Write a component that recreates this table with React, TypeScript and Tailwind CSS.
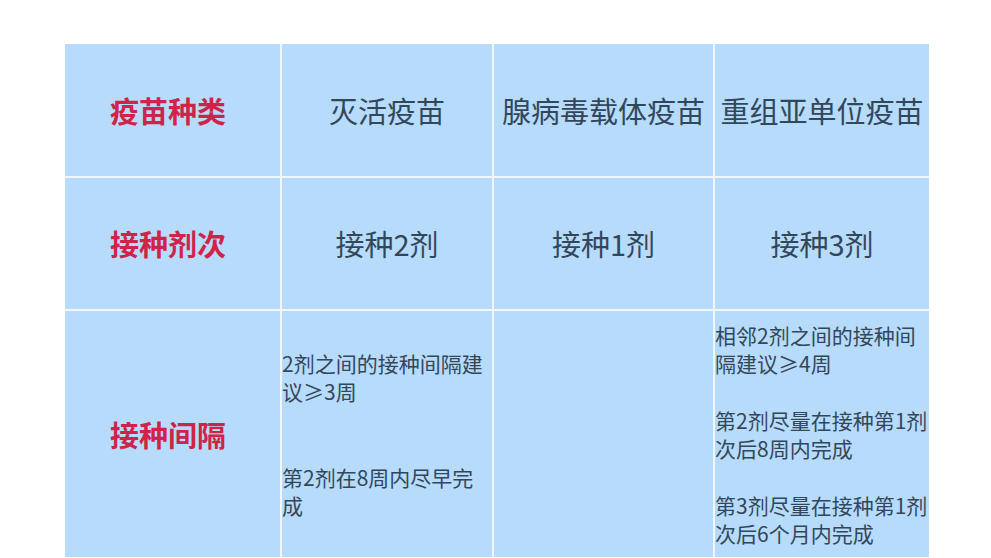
const cjk = { fontFamily: '"Noto Sans CJK SC", "Noto Sans", sans-serif' };

function Label({ children }: { children: string }) {
  return (
    <div className="flex items-center justify-center bg-[#b7dbfa] pr-[9px]">
      <span className="text-[29px] font-bold text-[#d0234a] leading-none">{children}</span>
    </div>
  );
}

function Cell({ children }: { children: React.ReactNode }) {
  return (
    <div className="flex items-center justify-center bg-[#b7dbfa]">
      <span className="text-[29px] text-[#33475a] leading-none whitespace-nowrap">{children}</span>
    </div>
  );
}

export default function App() {
  return (
    <div className="w-[991px] h-[558px] bg-white overflow-hidden pt-[44px] pl-[65px]" style={cjk}>
      <div className="grid grid-cols-[215px_210px_219px_214px] grid-rows-[132px_131px_246px] gap-[2px] w-[864px] bg-[#eef6fe]">
        <Label>疫苗种类</Label>
        <Cell>灭活疫苗</Cell>
        <Cell>腺病毒载体疫苗</Cell>
        <Cell>重组亚单位疫苗</Cell>

        <Label>接种剂次</Label>
        <Cell>接种2剂</Cell>
        <Cell>接种1剂</Cell>
        <Cell>接种3剂</Cell>

        <Label>接种间隔</Label>
        <div className="flex flex-col justify-center bg-[#b7dbfa] pr-[4px] text-[21px] leading-[28px] text-[#33475a]">
          <p>2剂之间的接种间隔建议≥3周</p>
          <p className="mt-[58px]">第2剂在8周内尽早完成</p>
        </div>
        <div className="bg-[#b7dbfa]" />
        <div className="flex flex-col justify-center bg-[#b7dbfa] text-[21px] leading-[28px] text-[#33475a]">
          <p>相邻2剂之间的接种间隔建议≥4周</p>
          <p className="mt-[29px]">第2剂尽量在接种第1剂次后8周内完成</p>
          <p className="mt-[29px]">第3剂尽量在接种第1剂次后6个月内完成</p>
        </div>
      </div>
    </div>
  );
}
